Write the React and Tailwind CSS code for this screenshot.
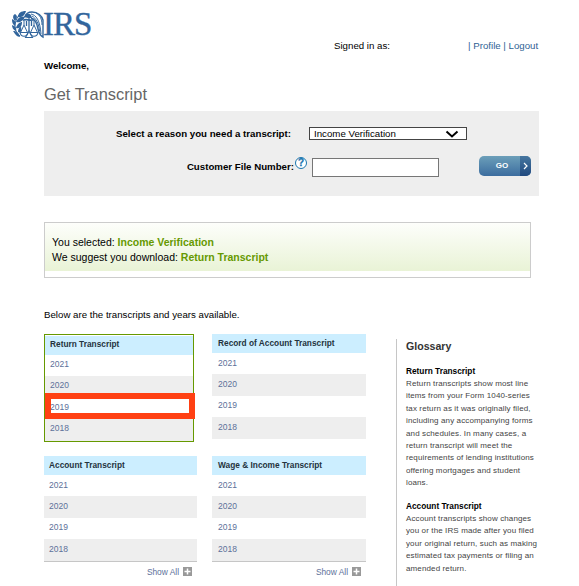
const YEARS = [2021, 2020, 2019, 2018];

function Logo() {
  return (
    <div className="flex h-[30px] w-[90px] items-start text-[#32659c]">
      <svg width="32" height="28" viewBox="0 0 32 28" className="mt-[1px] shrink-0" fill="none" stroke="currentColor">
        {/* laurel branch */}
        <path d="M8 25C2 21 1 12 7 4" strokeWidth="1" />
        <g fill="currentColor" stroke="none">
          <path d="M6 6C6 2 9 0 14 0C13 4 10 7 6 6Z" />
          <path d="M3 10C0 7 1 4 3 3C6 5 5 7 3 10Z" />
          <path d="M4 11C6 6 9 5 13 6C11 10 8 12 4 11Z" />
          <path d="M3 15C0 13 0 10 0 8C4 10 4 12 3 15Z" />
          <path d="M4 17C5 13 8 11 10 11C10 15 8 18 4 17Z" />
          <path d="M4 20C1 19 0 16 0 14C3 15 5 17 4 20Z" />
          <path d="M6 21C6 18 7 16 9 16C10 20 9 22 6 21Z" />
          <path d="M8 26C5 26 3 23 1 20C5 20 7 22 8 26Z" />
        </g>
        {/* eagle */}
        <path d="M13 6C14 2 17 1 20 1C26 1 30 5 31 9V26C29 25 27 22 26 18C25 12 23 8 19 7" strokeWidth="1.4" />
        <path d="M19 3C24 4 28 9 29 23M24 2C28 4 30 8 30 14M20 5C24 7 27 13 27.5 20" strokeWidth="1" />
        <path d="M12 6C14 2 17 2 19 4L20 7L16 7Z" fill="currentColor" stroke="none" />
        {/* balance */}
        <path d="M11 9.5C14 7 18 10.5 22 8.5" strokeWidth="1.6" />
        <path d="M17 7V20M14.5 10V15M19.5 10V15" strokeWidth="1.3" />
        <path d="M12 10V14L8.5 21.5M12 14L15.5 21.5M22 9V14L18.5 21.5M22 14L25.5 21.5" strokeWidth="1" />
        <path d="M8 21.5C9 26.5 15 26.5 16 21.5ZM18 21.5C19 26.5 25 26.5 26 21.5Z" strokeWidth="1.2" />
        <path d="M13.5 26.5L17 20L20.5 26.5Z" strokeWidth="1.1" />
      </svg>
      <span className="-ml-px -mt-[3px] font-['Liberation_Serif',serif] text-[33px] leading-[34px] tracking-[-1px] [-webkit-text-stroke:0.4px_#32659c]">IRS</span>
    </div>
  );
}

function YearCard({ title, className = "", pad = "pl-[5px]", outlined = false, showAll = false }) {
  return (
    <div className={className}>
      <div className={`${pad} h-[19px] bg-[#cceeff] text-[8.3px] font-bold tracking-[0.01px] text-[#24333d] ${outlined ? "leading-[17px]" : "leading-[19px]"}`}>{title}</div>
      {YEARS.map((year, i) => (
        <div key={year} className={`${pad} text-[8.5px] text-[#5d7199] ${outlined || i === 2 ? "leading-[19px]" : "leading-[21px]"} ${i % 2 ? "h-[22px] bg-[#eeeeee]" : "h-[21px]"}`}>{year}</div>
      ))}
      {showAll && (
        <div className="flex h-5 items-center justify-end gap-[4px] border-t border-[#c6c6c6] pr-[5px] text-[8.4px] leading-[10px] text-[#5d7199]">
          <span>Show All</span>
          <svg width="9" height="9" viewBox="0 0 9 9"><path fill="#999" d="M0 0h9v9H0z" /><path d="M4.5 1.5v6M1.5 4.5h6" stroke="white" strokeWidth="1.5" /></svg>
        </div>
      )}
    </div>
  );
}

function Entry({ title, lines }) {
  return (
    <div className="mb-[10.4px] leading-[12.4px]">
      <div className="h-[13px] text-[8.3px] font-bold text-black">{title}</div>
      {lines.map((line) => <div key={line} className="text-[8px] tracking-[0.12px] text-[#444444]">{line}</div>)}
    </div>
  );
}

export default function App() {
  return (
    <main className="h-[586px] w-[579px] overflow-hidden bg-white font-['Liberation_Sans',Arial,sans-serif] text-black">
      <header className="h-[59px] pl-3 pt-[10px]">
        <Logo />
        <div className="flex h-3 pl-[322px] text-[9.7px] leading-3">
          <span className="w-[134px]">Signed in as:</span>
          <span className="text-[#2f5f94]">| Profile | Logout</span>
        </div>
      </header>
      <section className="h-[275px] pl-11">
        <div className="h-[26px] text-[9.7px] font-bold leading-[14px]">Welcome,</div>
        <h1 className="h-[26px] text-[16.4px] leading-[19px] text-[#666666]">Get Transcript</h1>
        <div className="flex h-[85px] w-[495px] bg-[#eeeeee]">
          <div className="w-[247px] shrink-0 text-right text-[9.7px] font-bold">
            <div className="mt-4 h-[14px] leading-[14px]">Select a reason you need a transcript:</div>
            <div className="mt-[19px] flex h-[14px] justify-end leading-[14px]"><span className="-mr-[3px]">Customer File Number:</span></div>
          </div>
          <div className="flex w-[188px] shrink-0 flex-col pl-1">
            <div className="ml-[14px] mt-4 flex h-[13px] w-[158px] items-center justify-between border border-[#444444] bg-white pl-1 pr-[7px] text-[9.7px] leading-none">
              <span>Income Verification</span>
              <svg width="14" height="8" viewBox="0 0 14 8" fill="none" stroke="black" strokeWidth="2"><path d="M1.5 1.5L7 6.5L12.5 1.5" /></svg>
            </div>
            <div className="mt-[17px] flex">
              <div className="flex h-3 w-3 items-center justify-center rounded-full border border-[#1b76ae] bg-white text-[10px] font-bold leading-none text-[#1b76ae] [-webkit-text-stroke:0.3px_#1b76ae]">?</div>
              <input aria-label="Customer File Number" className="ml-[5px] mt-px h-[19px] w-[127px] border border-[#767676] bg-white" />
            </div>
          </div>
          <button className="mt-[45px] flex h-5 w-[52px] overflow-hidden rounded-[5px] bg-gradient-to-b from-[#6c9fb9] to-[#3c6d9f] text-white">
            <span className="flex h-5 w-[41px] items-center justify-center pl-[5px] text-[8px] font-bold">GO</span>
            <span className="flex h-5 w-[11px] items-center justify-center bg-gradient-to-b from-[#46769f] to-[#21497f]">
              <svg width="5" height="8" viewBox="0 0 5 8" fill="none" stroke="white" strokeWidth="1.2"><path d="M1 1L4 4L1 7" /></svg>
            </span>
          </button>
        </div>
        <div className="mt-[26px] h-14 w-[487px] border border-[#cccccc] bg-white">
          <div className="h-12 bg-gradient-to-b from-[#fdfefb] to-[#e9f3d6] pl-[7px] pt-3 text-[10.5px] leading-[15px]">
            <div>You selected: <b className="text-[#669900]">Income Verification</b></div>
            <div>We suggest you download: <b className="text-[#669900]">Return Transcript</b></div>
          </div>
        </div>
        <p className="mt-[30px] text-[9.7px] leading-[14px]">Below are the transcripts and years available.</p>
      </section>
      <div className="flex pl-11">
        <section className="w-[322px] shrink-0">
          <div className="flex h-[122px] items-start gap-[18px]">
            <div className="relative">
              <YearCard title="Return Transcript" className="h-[108px] w-[150px] border border-[#669900] pt-px" outlined />
              <div className="absolute left-[1px] top-[59px] h-[26px] w-[150px] border-[6px] border-[#ff4013]" />
            </div>
            <YearCard title="Record of Account Transcript" className="w-[154px]" pad="pl-[6px]" />
          </div>
          <div className="flex gap-[15px]">
            <YearCard title="Account Transcript" className="w-[153px]" showAll />
            <YearCard title="Wage & Income Transcript" className="w-[154px]" pad="pl-[6px]" showAll />
          </div>
        </section>
        <aside className="ml-[30px] mt-[5px] h-[247px] w-[150px] whitespace-nowrap border-l border-[#c6c6c6] pl-[9px]">
          <h2 className="mb-[11px] text-[10.6px] font-bold leading-[15px] text-[#333333]">Glossary</h2>
          <Entry title="Return Transcript" lines={["Return transcripts show most line", "items from your Form 1040-series", "tax return as it was originally filed,", "including any accompanying forms", "and schedules. In many cases, a", "return transcript will meet the", "requirements of lending institutions", "offering mortgages and student", "loans."]} />
          <Entry title="Account Transcript" lines={["Account transcripts show changes", "you or the IRS made after you filed", "your original return, such as making", "estimated tax payments or filing an", "amended return."]} />
        </aside>
      </div>
    </main>
  );
}
